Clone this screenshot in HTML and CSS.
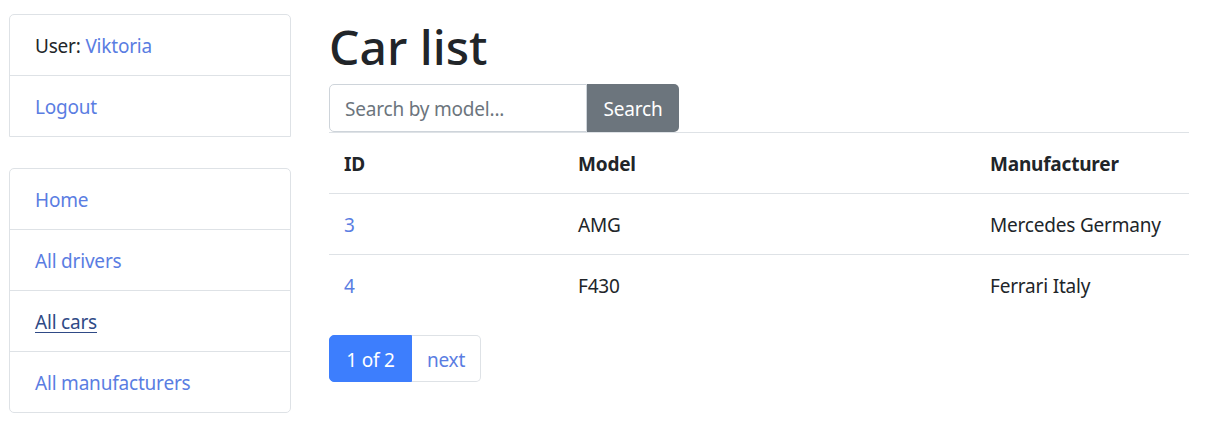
FILE: index.html
```html
<!DOCTYPE html>
<html lang="en">
<head>
<meta charset="utf-8">
<title>Car list</title>
<link rel="stylesheet" href="styles.css">
</head>
<body>
<div class="page">
  <aside class="sidebar">
    <ul class="list-group">
      <li class="list-item">User: <a href="#">Viktoria</a></li>
      <li class="list-item"><a href="#">Logout</a></li>
    </ul>
    <ul class="list-group nav-group">
      <li class="list-item"><a href="#">Home</a></li>
      <li class="list-item"><a href="#">All drivers</a></li>
      <li class="list-item"><a href="#" class="current">All cars</a></li>
      <li class="list-item"><a href="#">All manufacturers</a></li>
    </ul>
  </aside>
  <main class="main">
    <h1 class="title">Car list</h1>
    <form class="search">
      <input class="search-input" type="text" placeholder="Search by model...">
      <button class="search-btn" type="button">Search</button>
    </form>
    <table class="table">
      <thead>
        <tr><th class="col-id">ID</th><th class="col-model">Model</th><th>Manufacturer</th></tr>
      </thead>
      <tbody>
        <tr><td><a href="#">3</a></td><td>AMG</td><td>Mercedes Germany</td></tr>
        <tr><td><a href="#">4</a></td><td>F430</td><td>Ferrari Italy</td></tr>
      </tbody>
    </table>
    <nav class="pagination">
      <span class="page-item active">1 of 2</span>
      <a class="page-item next" href="#">next</a>
    </nav>
  </main>
</div>
</body>
</html>
```

FILE: styles.css
```css
* { box-sizing: border-box; }
html, body { margin: 0; padding: 0; background: #fff; }
body {
  font-family: "Noto Sans", "Open Sans", "Liberation Sans", sans-serif;
  font-size: 19px;
  letter-spacing: -0.2px;
  line-height: 30px;
  color: #212529;
}
a { color: #5a7de2; text-decoration: none; }

.page {
  display: flex;
  gap: 38px;
  padding: 14px 18px 0 9px;
}

.sidebar { width: 282px; flex: none; }
.list-group {
  list-style: none;
  margin: 0;
  padding: 0;
  border: 1px solid #dee2e6;
  border-radius: 5px;
}
.list-group:first-child { border-bottom-left-radius: 0; border-bottom-right-radius: 0; }
.nav-group { margin-top: 31px; }
.list-item {
  padding: 16px 25px 14px;
  height: 61px;
  border-top: 1px solid #dee2e6;
}
.list-item:first-child { border-top: none; height: 60px; }
.current { color: #2f4a86; text-decoration: underline; text-underline-offset: 3px; }

.main { flex: 1; min-width: 0; }
.title {
  margin: 0 0 10px;
  padding-top: 3px;
  height: 60px;
  font-size: 48px;
  font-weight: 500;
  line-height: 60px;
  letter-spacing: 0;
}
.search { display: flex; margin: 0; }
.search-input {
  width: 258px;
  height: 48px;
  border: 1px solid #ced4da;
  border-radius: 5px 0 0 5px;
  padding: 1px 15px 0;
  font: inherit;
  letter-spacing: inherit;
  color: #212529;
  outline: none;
}
.search-input::placeholder { color: #6c757d; }
.search-btn {
  width: 92px;
  height: 48px;
  border: none;
  border-radius: 0 5px 5px 0;
  background: #6c757d;
  color: #fff;
  font: inherit;
  letter-spacing: inherit;
  padding: 1px 0 0;
}

.table {
  width: 100%;
  border-collapse: collapse;
  margin-bottom: 20px;
}
.table th, .table td {
  text-align: left;
  padding: 16px 15px 14px;
  line-height: 30px;
  border-top: 1px solid #dee2e6;
  vertical-align: top;
}
.table th { font-weight: 700; }
.col-id { width: 234px; }
.col-model { width: 412px; }

.pagination { display: flex; }
.page-item {
  display: block;
  height: 47px;
  padding: 9px 0 7px;
  line-height: 30px;
  text-align: center;
  white-space: nowrap;
  border: 1px solid #dee2e6;
}
.page-item.active {
  background: #3d7efd;
  border-color: #3d7efd;
  color: #fff;
  border-radius: 5px 0 0 5px;
  width: 83px;
}
.page-item.next {
  border-left: none;
  border-radius: 0 5px 5px 0;
  width: 69px;
}
```
